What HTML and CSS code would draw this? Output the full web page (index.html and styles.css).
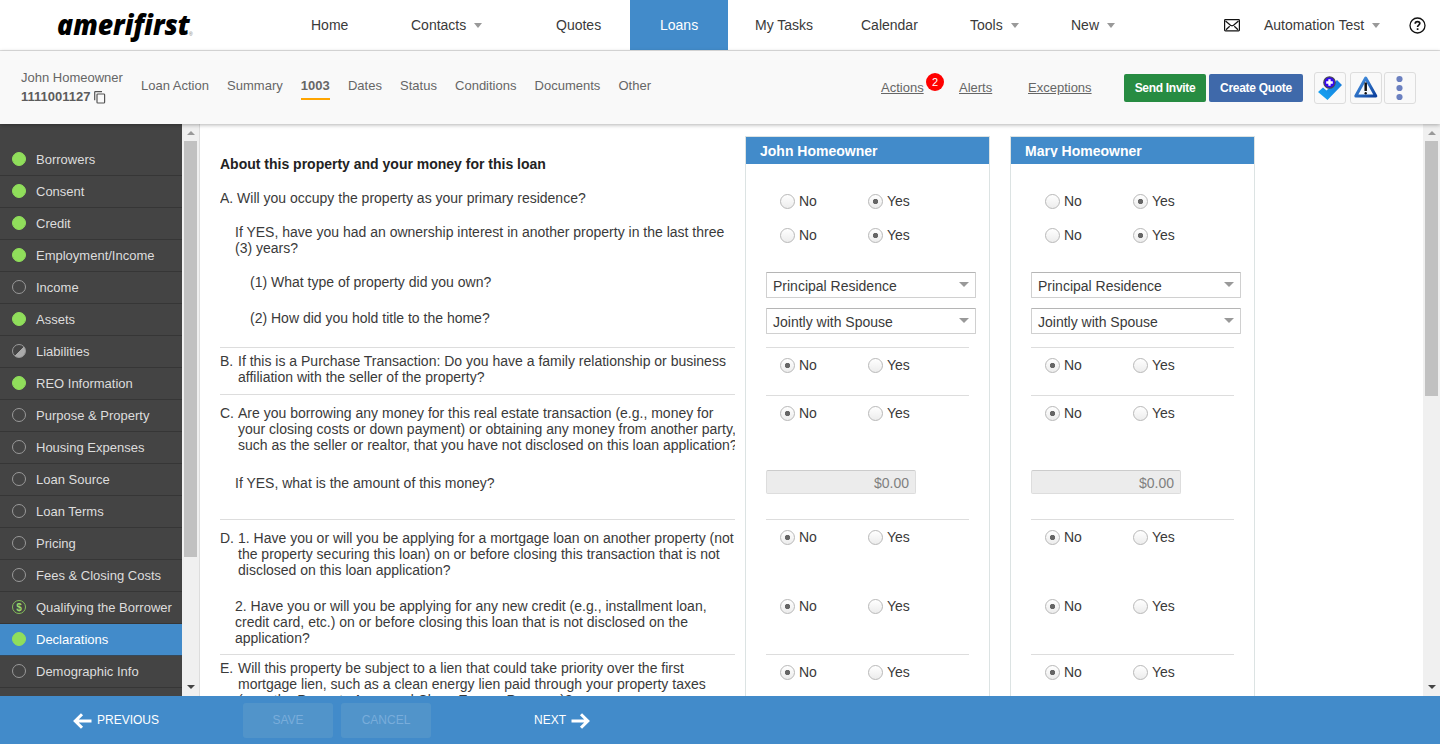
FILE: index.html
```html
<!DOCTYPE html>
<html lang="en">
<head>
<meta charset="utf-8">
<title>Loan 1003 - Declarations</title>
<link rel="stylesheet" href="styles.css">
</head>
<body>
<header class="topbar">
  <div class="brand"><svg width="140" height="50" viewBox="0 0 140 50"><text class="logo" x="1" y="35" textLength="133" lengthAdjust="spacingAndGlyphs">amerifirst</text><text class="reg" x="133" y="36">®</text></svg></div>
  <nav class="mainnav">
    <a class="n-home">Home</a>
    <a class="n-contacts">Contacts<i class="caret"></i></a>
    <a class="n-quotes">Quotes</a>
    <a class="n-loans">Loans</a>
    <a class="n-tasks">My Tasks</a>
    <a class="n-cal">Calendar</a>
    <a class="n-tools">Tools<i class="caret"></i></a>
    <a class="n-new">New<i class="caret"></i></a>
  </nav>
  <div class="account">
    <svg class="mail" width="16" height="13" viewBox="0 0 16 13" fill="none" stroke="#111" stroke-width="1.2"><rect x=".6" y=".6" width="14.8" height="11.3" rx=".8"/><path d="M1.5 2l5 4.2q1.500 1.100 3 0L14.500 2M2 10.800l3.700-3.600M14 10.800l-3.700-3.600"/></svg>
    <a class="user">Automation Test<i class="caret"></i></a>
    <svg class="help" width="17" height="17" viewBox="0 0 17 17" fill="none" stroke="#111" stroke-width="1.300"><circle cx="8.500" cy="8.500" r="7.500"/><path stroke-width="1.700" d="M6.200 6.800c0-1.400 1-2.200 2.300-2.200s2.300.8 2.300 2c0 1.500-2.200 1.600-2.200 3.300M8.600 11.300v1.600"/></svg>
  </div>
</header>
<section class="loanbar">
  <div class="borrower">
    <div class="bname">John Homeowner</div>
    <div class="bnum">1111001127<svg width="12" height="13" viewBox="0 0 12 13" fill="none" stroke="#555" stroke-width="1.200"><path d="M.7 9.200V1.200q0-.6.6-.6H8"/><rect x="3" y="3" width="7.600" height="9" rx=".8"/></svg></div>
  </div>
  <nav class="tabs">
    <a class="t-action">Loan Action</a><a class="t-summary">Summary</a><a class="t-1003">1003</a><a class="t-dates">Dates</a><a class="t-status">Status</a><a class="t-cond">Conditions</a><a class="t-docs">Documents</a><a class="t-other">Other</a>
  </nav>
  <div class="links">
    <a class="l-actions">Actions<b class="badge">2</b></a><a class="l-alerts">Alerts</a><a class="l-exc">Exceptions</a>
  </div>
  <div class="buttons">
    <button class="invite">Send Invite</button>
    <button class="quote">Create Quote</button>
    <span class="tool tool-a"><svg width="30" height="30" viewBox="0 0 30 30"><defs><linearGradient id="tk" x1="0" y1="1" x2="1" y2="0"><stop offset="0" stop-color="#15a9f5"/><stop offset="1" stop-color="#1677d8"/></linearGradient></defs><path fill="url(#tk)" d="M3 19l5-4.500 3.500 3 10.500-10.500 5 5-14.500 15z"/><circle cx="14.500" cy="9.500" r="5.700" fill="#3408f5" stroke="#484858" stroke-width="1.200"/><path d="M14.500 6.200v6.600M11.200 9.500h6.600" stroke="#fff" stroke-width="2.300"/></svg></span>
    <span class="tool tool-b"><svg width="30" height="30" viewBox="0 0 30 30"><defs><linearGradient id="wr" x1="0" y1="0" x2="1" y2="1"><stop offset="0" stop-color="#4c9be8"/><stop offset="1" stop-color="#0b3f9c"/></linearGradient></defs><path fill="#f4f8fc" stroke="url(#wr)" stroke-width="3" stroke-linejoin="round" d="M14.700 5L24.800 23H4.800z"/><path d="M14.700 9.500v8.500" stroke="#111" stroke-width="2.500"/><circle cx="14.700" cy="20.300" r="1.200" fill="#111"/></svg></span>
    <span class="tool tool-c"><svg width="30" height="30" viewBox="0 0 30 30" fill="#6b80c0"><circle cx="14.500" cy="6" r="3.100"/><circle cx="14.500" cy="15" r="3.100"/><circle cx="14.500" cy="24" r="3.100"/></svg></span>
  </div>
</section>
<main class="workspace">
  <aside class="side">
    <ul>
      <li><i class="dot done"></i>Borrowers</li>
      <li><i class="dot done"></i>Consent</li>
      <li><i class="dot done"></i>Credit</li>
      <li><i class="dot done"></i>Employment/Income</li>
      <li><i class="dot"></i>Income</li>
      <li><i class="dot done"></i>Assets</li>
      <li><i class="dot half"></i>Liabilities</li>
      <li><i class="dot done"></i>REO Information</li>
      <li><i class="dot"></i>Purpose &amp; Property</li>
      <li><i class="dot"></i>Housing Expenses</li>
      <li><i class="dot"></i>Loan Source</li>
      <li><i class="dot"></i>Loan Terms</li>
      <li><i class="dot"></i>Pricing</li>
      <li><i class="dot"></i>Fees &amp; Closing Costs</li>
      <li><i class="dot money">$</i>Qualifying the Borrower</li>
      <li class="active"><i class="dot done"></i>Declarations</li>
      <li><i class="dot"></i>Demographic Info</li>
    </ul>
  </aside>
  <div class="scroll scroll-left"><i class="up"></i><div class="thumb"></div><i class="down"></i></div>
  <div class="content">
    <div class="questions">
      <h2>About this property and your money for this loan</h2>
      <div class="qa"><p class="flat">A. Will you occupy the property as your primary residence?</p></div>
      <div class="qa2"><p class="in1">If YES, have you had an ownership interest in another property in the last three<br>(3) years?</p></div>
      <div class="qa3"><p class="in2">(1) What type of property did you own?</p></div>
      <div class="qa4"><p class="in2">(2) How did you hold title to the home?</p></div>
      <div class="qb rule"><p class="item"><span>B.</span>If this is a Purchase Transaction: Do you have a family relationship or business<br>affiliation with the seller of the property?</p></div>
      <div class="qc rule"><p class="item"><span>C.</span>Are you borrowing any money for this real estate transaction (e.g., money for<br>your closing costs or down payment) or obtaining any money from another party,<br>such as the seller or realtor, that you have not disclosed on this loan application?</p></div>
      <div class="qc2"><p class="in1">If YES, what is the amount of this money?</p></div>
      <div class="qd rule"><p class="item"><span>D.</span>1. Have you or will you be applying for a mortgage loan on another property (not<br>the property securing this loan) on or before closing this transaction that is not<br>disclosed on this loan application?</p></div>
      <div class="qd2"><p class="in1">2. Have you or will you be applying for any new credit (e.g., installment loan,<br>credit card, etc.) on or before closing this loan that is not disclosed on the<br>application?</p></div>
      <div class="qe rule"><p class="item"><span>E.</span>Will this property be subject to a lien that could take priority over the first<br>mortgage lien, such as a clean energy lien paid through your property taxes<br>(e.g., the Property Assessed Clean Energy Program)?</p></div>
    </div>
    <div class="panel">
      <h3>John Homeowner</h3>
      <div class="answers">
        <div class="row r1"><label><i class="radio"></i>No</label><label><i class="radio on"></i>Yes</label></div>
        <div class="row r2"><label><i class="radio"></i>No</label><label><i class="radio on"></i>Yes</label></div>
        <div class="select">Principal Residence<i class="caret"></i></div>
        <div class="select">Jointly with Spouse<i class="caret"></i></div>
        <div class="row rb rule"><label><i class="radio on"></i>No</label><label><i class="radio"></i>Yes</label></div>
        <div class="row rc rule"><label><i class="radio on"></i>No</label><label><i class="radio"></i>Yes</label></div>
        <div class="money-box">$0.00</div>
        <div class="row rd rule"><label><i class="radio on"></i>No</label><label><i class="radio"></i>Yes</label></div>
        <div class="row rd2"><label><i class="radio on"></i>No</label><label><i class="radio"></i>Yes</label></div>
        <div class="row re rule"><label><i class="radio on"></i>No</label><label><i class="radio"></i>Yes</label></div>
      </div>
    </div>
    <div class="panel">
      <h3>Mary Homeowner</h3>
      <div class="answers">
        <div class="row r1"><label><i class="radio"></i>No</label><label><i class="radio on"></i>Yes</label></div>
        <div class="row r2"><label><i class="radio"></i>No</label><label><i class="radio on"></i>Yes</label></div>
        <div class="select">Principal Residence<i class="caret"></i></div>
        <div class="select">Jointly with Spouse<i class="caret"></i></div>
        <div class="row rb rule"><label><i class="radio on"></i>No</label><label><i class="radio"></i>Yes</label></div>
        <div class="row rc rule"><label><i class="radio on"></i>No</label><label><i class="radio"></i>Yes</label></div>
        <div class="money-box">$0.00</div>
        <div class="row rd rule"><label><i class="radio on"></i>No</label><label><i class="radio"></i>Yes</label></div>
        <div class="row rd2"><label><i class="radio on"></i>No</label><label><i class="radio"></i>Yes</label></div>
        <div class="row re rule"><label><i class="radio on"></i>No</label><label><i class="radio"></i>Yes</label></div>
      </div>
    </div>
  </div>
  <div class="scroll scroll-right"><i class="up"></i><div class="thumb"></div><i class="down"></i></div>
</main>
<footer class="actions">
  <a class="prev"><svg width="19" height="16" viewBox="0 0 19 16" fill="none" stroke="#fff" stroke-width="3"><path d="M18.500 8H3M9 1.200L2.200 8 9 14.800"/></svg>PREVIOUS</a>
  <span class="ghost save">SAVE</span>
  <span class="ghost cancel">CANCEL</span>
  <a class="next">NEXT<svg width="19" height="16" viewBox="0 0 19 16" fill="none" stroke="#fff" stroke-width="3"><path d="M.5 8H16M10 1.200L16.800 8 10 14.800"/></svg></a>
</footer>
</body>
</html>
```
FILE: styles.css
```css
* { box-sizing: border-box; }
body {
  margin: 0;
  width: 1440px;
  height: 744px;
  overflow: hidden;
  display: flex;
  flex-direction: column;
  font-family: "Liberation Sans", Arial, sans-serif;
  font-size: 14px;
  color: #3a3a3a;
  background: #fff;
}
h2, h3, p, ul { margin: 0; padding: 0; }
svg { display: block; flex: none; }
.caret {
  display: inline-block;
  border: 4px solid transparent;
  border-top: 5px solid #999;
  border-bottom: 0;
  margin-left: 8px;
  flex: none;
}

/* Top navigation */
.topbar {
  height: 51px;
  flex: none;
  display: flex;
  border-bottom: 1px solid #e2e2e2;
}
.brand { width: 225px; padding-left: 56px; height: 50px; }
.logo { font: italic 800 28px "Open Sans", sans-serif; fill: #000; }
.reg { font-size: 5px; fill: #777; }
.mainnav { display: flex; height: 50px; width: 999px; }
.mainnav a { height: 50px; display: flex; align-items: center; padding-left: 30px; }
.mainnav .n-home { width: 156px; padding-left: 86px; }
.mainnav .n-contacts { width: 145px; }
.mainnav .n-quotes { width: 104px; }
.mainnav .n-loans { width: 98px; background: #428bca; color: #fff; }
.mainnav .n-tasks { width: 106px; padding-left: 27px; }
.mainnav .n-cal { width: 106px; padding-left: 27px; }
.mainnav .n-tools { width: 101px; }
.account { display: flex; align-items: center; height: 50px; }
.user { margin: 0 29px 0 24px; display: flex; align-items: center; white-space: nowrap; }

/* Loan bar */
.loanbar {
  height: 73px;
  flex: none;
  display: flex;
  background: #f9f9f9;
  color: #666;
  position: relative;
  z-index: 2;
  box-shadow: 0 1px 4px rgba(0, 0, 0, .3);
}
.borrower { width: 141px; padding: 18px 0 0 21px; line-height: 17px; white-space: nowrap; font-size: 13px; }
.bnum { display: flex; font-weight: bold; gap: 4px; line-height: 20px; padding-top: 1px; align-items: center; color: #5c5c5c; }
.tabs { display: flex; width: 740px; padding-top: 26px; }
.tabs a { height: 23px; line-height: 17px; margin-right: 18.15px; }
.tabs .t-1003 { font-weight: bold; font-size: 13px; border-bottom: 2px solid #ffa500; }
.tabs, .links { font-size: 13px; }
.links { display: flex; width: 243px; padding-top: 28px; line-height: 17px; }
.links a { text-decoration: underline; }
.l-actions { width: 78px; position: relative; }
.l-alerts { width: 69px; }
.badge {
  position: absolute;
  left: 45px;
  top: -6px;
  width: 18px;
  height: 18px;
  border-radius: 50%;
  background: #f00;
  color: #fff;
  font: 11px/18px "Liberation Sans", Arial, sans-serif;
  text-align: center;
}
.buttons { display: flex; padding-top: 21px; }
.buttons button {
  height: 28px;
  margin: 2px 3px 0 0;
  border: 0;
  padding: 0;
  border-radius: 2px;
  color: #fff;
  font: bold 12px "Liberation Sans", Arial, sans-serif;
  letter-spacing: -.3px;
}
.buttons .invite { width: 82px; background: #278c42; }
.buttons .quote { width: 94px; background: #3f69aa; margin-right: 11px; }
.tool { width: 32px; height: 32px; border: 1px solid #ddd; border-radius: 3px; margin-right: 4px; }
.tool-b { margin-right: 2px; }

/* Workspace */
.workspace { height: 572px; flex: none; display: flex; overflow: hidden; }
.side { width: 182px; background: #444; padding-top: 20px; overflow: hidden; }
.side ul { list-style: none; }
.side li {
  height: 32px;
  display: flex;
  align-items: center;
  border-bottom: 1px solid #363636;
  color: #ddd;
  font-size: 13px;
  padding-left: 12px;
  white-space: nowrap;
}
.side .active { background: #428bca; color: #fff; border-bottom-color: #36495a; }
.dot { width: 14px; height: 14px; border: 1px solid #999; border-radius: 50%; margin: 0 10px 2px 0; flex: none; }
.done { background: #90de5b; border-color: #90de5b; }
.half { background: linear-gradient(135deg, transparent 50%, #aaa 50%); }
.money { border-color: #85c05b; color: #9bdb6c; font: bold 10px/13px "Liberation Sans", sans-serif; text-align: center; }
.scroll { flex: none; background: #f0f0f0; display: flex; flex-direction: column; align-items: center; }
.scroll-left { width: 18px; border-right: 1px solid #ddd; }
.scroll-right { width: 17px; }
.up, .down { border: 4px solid transparent; }
.up { border-bottom: 4px solid #999; border-top: 0; margin: 7px 0 6px; }
.down { border-top: 4px solid #444; border-bottom: 0; margin-top: auto; margin-bottom: 7px; }
.thumb { width: 13px; background: #c1c1c1; flex: none; }
.scroll-left .thumb { height: 416px; }
.scroll-right .thumb { height: 255px; }

/* Form */
.content { flex: 1; display: flex; align-items: flex-start; height: 572px; overflow: hidden; padding-left: 20px; line-height: 16px; }
.questions { width: 515px; margin-right: 10px; overflow: hidden; white-space: nowrap; padding-top: 32px; }
.questions h2 { font-size: 14px; line-height: 16px; height: 34px; color: #222; }
.rule { border-top: 1px solid #ddd; }
.in1 { padding-left: 15px; }
.in2 { padding-left: 30px; }
.item { padding-left: 18px; }
.item span { display: inline-block; width: 18px; margin-left: -18px; }
.qa { height: 34px; }
.qa2 { height: 50px; }
.qa3 { height: 36px; }
.qa4 { height: 37px; }
.qb { height: 47px; padding-top: 5px; }
.qc { height: 81px; padding-top: 10px; }
.qc2 { height: 44px; }
.qd { height: 79px; padding-top: 10px; }
.qd2 { height: 56px; }
.qe { height: 60px; padding-top: 5px; }
.panel { width: 245px; height: 600px; flex: none; border: 1px solid #dce3e3; margin: 12px 20px 0 0; }
.panel h3 {
  height: 27px;
  background: #428bca;
  border-bottom: 7px solid #428bca;
  color: #fff;
  font-size: 14px;
  line-height: 16px;
  padding: 6px 0 0 14px;
  overflow: hidden;
}
.answers { width: 223px; padding-left: 20px; }
.row { display: flex; padding-left: 14px; }
.row label { width: 88px; height: 16px; display: flex; align-items: center; gap: 4px; flex: none; }
.radio {
  width: 15px;
  height: 15px;
  border: 1px solid #b8b8b8;
  border-radius: 50%;
  background: linear-gradient(#fff, #ececec);
}
.on { background: radial-gradient(circle, #666 0 2.300px, transparent 3px), linear-gradient(#fff, #ececec); }
.r1 { height: 63px; padding-top: 29px; }
.r2 { height: 45px; }
.select {
  width: 210px;
  height: 26px;
  margin-bottom: 10px;
  border: 1px solid #d0d0d0;
  border-top-color: #b5b5b5;
  border-radius: 1px;
  padding: 5px 6px 0;
  display: flex;
  justify-content: space-between;
}
.select .caret { margin-top: 4px; border-left-width: 5px; border-right-width: 5px; }
.rb { height: 48px; margin-top: 13px; padding-top: 9px; }
.rc { height: 75px; padding-top: 9px; }
.money-box {
  width: 150px;
  height: 24px;
  margin-bottom: 25px;
  border: 1px solid #ddd;
  border-top-color: #ccc;
  border-radius: 2px;
  background: #ececec;
  color: #808080;
  text-align: right;
  padding: 4px 6px 0;
}
.rd { height: 79px; padding-top: 9px; }
.rd2 { height: 56px; }
.re { height: 60px; padding-top: 9px; }

/* Footer */
.actions { height: 48px; flex: none; background: #428bca; color: #fff; display: flex; align-items: center; font-size: 12px; }
.prev { display: flex; align-items: center; gap: 5px; width: 243px; padding-left: 73px; }
.prev svg, .next svg { margin-top: 2px; }
.ghost { width: 90px; height: 35px; margin-right: 8px; border-radius: 3px; background: #5194ca; color: #79addb; text-align: center; line-height: 35px; }
.next { display: flex; align-items: center; gap: 5px; margin-left: 95px; }
```
